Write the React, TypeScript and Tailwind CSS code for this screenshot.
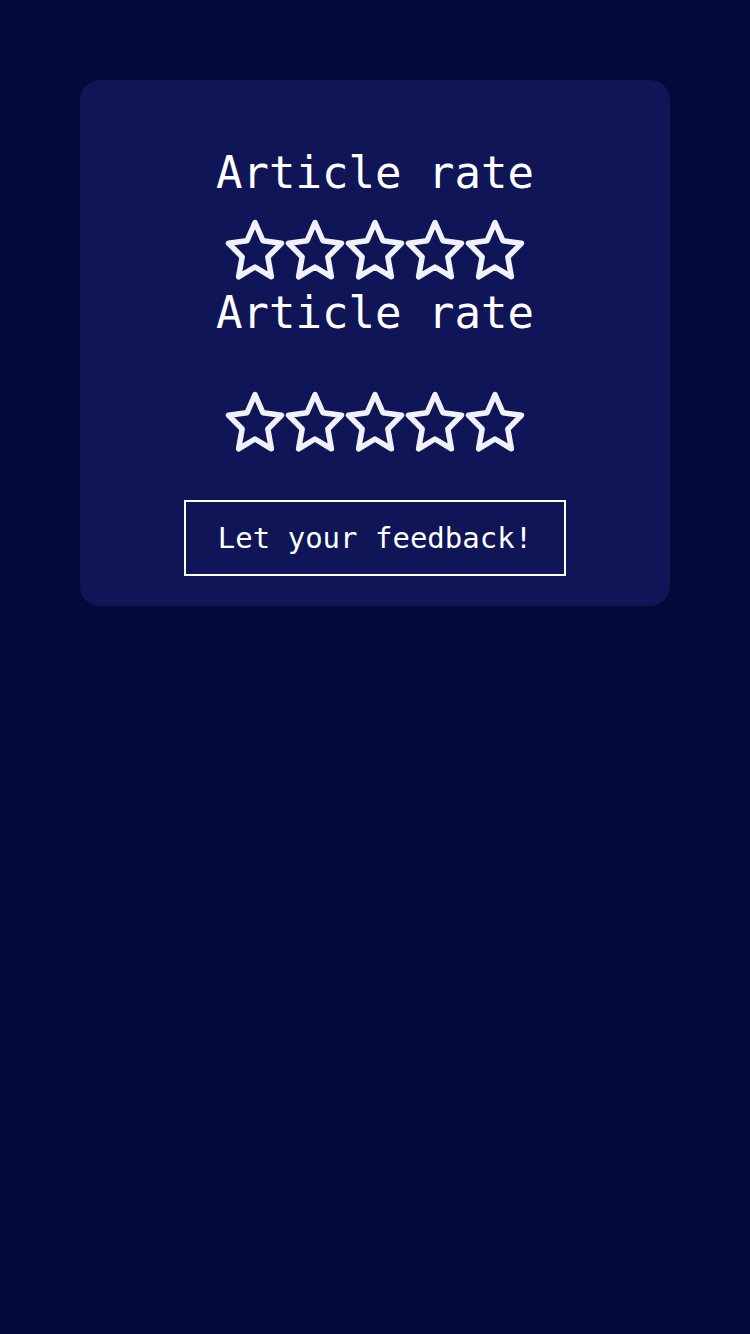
const mono = { fontFamily: '"DejaVu Sans Mono", "Liberation Mono", monospace' };

function StarIcon() {
  return (
    <svg
      width="60"
      height="60"
      viewBox="0 0 60 60"
      fill="none"
      className="overflow-visible"
      aria-hidden="true"
    >
      <path
        d="M30 2.5 L37.93 20.77 L56.5 23.23 L42.83 36.98 L46.4 56.77 L30 47 L13.6 56.77 L17.17 36.98 L3.5 23.23 L22.07 20.77 Z"
        stroke="#f1f1fa"
        strokeWidth="5.5"
        strokeLinejoin="round"
      />
    </svg>
  );
}

function StarRow({ className }: { className?: string }) {
  return (
    <div className={`flex ${className ?? ""}`}>
      {[0, 1, 2, 3, 4].map((i) => (
        <StarIcon key={i} />
      ))}
    </div>
  );
}

export default function App() {
  return (
    <div className="min-h-screen bg-[#050939] pt-[80px]" style={mono}>
      <section className="mx-auto flex w-[590px] flex-col items-center rounded-[20px] bg-[#0f1557] pt-[71px] pb-[30px] text-white">
        <h1 className="text-[44px] leading-[44px] font-normal">Article rate</h1>
        <StarRow className="mt-[25px]" />
        <h2 className="mt-[11px] text-[44px] leading-[44px] font-normal">
          Article rate
        </h2>
        <StarRow className="mt-[57px]" />
        <button className="mt-[48px] flex h-[76px] w-[382px] items-center justify-center border-2 border-white text-[29px] leading-none text-white">
          Let your feedback!
        </button>
      </section>
    </div>
  );
}
